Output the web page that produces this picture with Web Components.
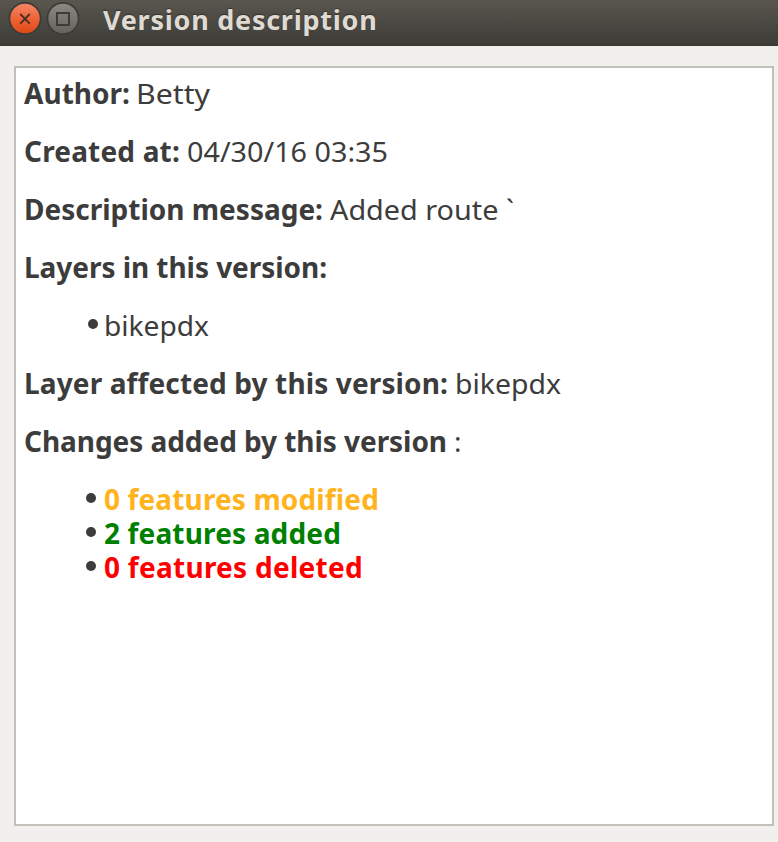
<!DOCTYPE html>
<html lang="en">
<head>
<meta charset="utf-8">
<title>Version description</title>
<style>
html, body { margin: 0; height: 100%; }
body { overflow: hidden; font-family: "Noto Sans", "Open Sans", sans-serif; color: #3c3c3c; background: #f1f0ef; }
</style>
</head>
<body>
<version-window></version-window>
<script>
/* A run of text fitted to an exact width: w = width, gap = space before it.
   Bold runs are fitted by letter spacing, regular ones by stretching. */
class TextRun extends HTMLElement {
  connectedCallback() {
    const root = this.attachShadow({ mode: 'open' });
    root.innerHTML = `<style>
      :host { display: inline-block; white-space: pre; flex: none; }
      :host([bold]) { font-weight: 700; }
      span { display: inline-block; transform-origin: 0 50%; }
    </style><span><slot></slot></span>`;
    const w = +this.getAttribute('w');
    this.style.marginLeft = (this.getAttribute('gap') || 0) + 'px';
    this.style.width = w + 'px';
    const span = root.querySelector('span');
    const natural = span.getBoundingClientRect().width;
    const n = this.textContent.length;
    if (n < 2) return;
    if (this.hasAttribute('bold')) span.style.letterSpacing = ((w - natural) / n).toFixed(3) + 'px';
    else span.style.transform = `scaleX(${(w / natural).toFixed(4)})`;
  }
}

class TitleBar extends HTMLElement {
  connectedCallback() {
    this.attachShadow({ mode: 'open' }).innerHTML = `<style>
      :host { display: flex; box-sizing: border-box; height: 46px; padding: 0 0 0 8px; align-items: flex-start;
        background: linear-gradient(#59564e, #3d3c37 97%, #353430); color: #dfdbd2; }
      svg { display: block; margin-top: 1px; flex: none; }
      .text { font-size: 27px; line-height: 34px; margin-top: 3px; margin-left: 23px; display: flex;
        text-shadow: 0 -1px 1px #33322e; }
    </style>
    <svg width="72" height="36" viewBox="0 0 72 36">
      <defs>
        <linearGradient id="c" x1="0" y1="0" x2="0" y2="1"><stop offset="0" stop-color="#f28868"/><stop offset=".5" stop-color="#ee6436"/><stop offset="1" stop-color="#df4716"/></linearGradient>
        <linearGradient id="m" x1="0" y1="0" x2="0" y2="1"><stop offset="0" stop-color="#8b8982"/><stop offset="1" stop-color="#64625c"/></linearGradient>
      </defs>
      <circle cx="17" cy="17.5" r="15.6" fill="url(#c)" stroke="#3d3b37" stroke-width="1.7"/>
      <path d="M12.2 13l9.6 9.6M21.8 13l-9.6 9.6" stroke="#4c3028" stroke-width="1.9"/>
      <circle cx="55" cy="17.5" r="15.6" fill="url(#m)" stroke="#3d3b37" stroke-width="1.7"/>
      <rect x="49" y="12" width="12" height="12" fill="none" stroke="#3c3b37" stroke-width="2"/>
    </svg>
    <div class="text"><slot></slot></div>`;
  }
}

class InfoRow extends HTMLElement {
  connectedCallback() {
    this.attachShadow({ mode: 'open' }).innerHTML = `<style>
      :host { display: flex; height: 34px; line-height: 34px; font-size: 28px; margin-bottom: 24px; }
    </style><slot></slot>`;
  }
}

class BulletItem extends HTMLElement {
  connectedCallback() {
    const plain = this.hasAttribute('plain');
    this.attachShadow({ mode: 'open' }).innerHTML = `<style>
      :host { display: flex; height: 34px; line-height: 34px; font-size: 28px; padding-left: ${plain ? 63.5 : 61.5}px; }
      i { width: 10.6px; height: 10.6px; border-radius: 50%; background: #3c3c3c; margin: 10.6px ${plain ? 5.9 : 7.9}px 0 0; flex: none; }
    </style><i></i><slot></slot>`;
  }
}

class BulletList extends HTMLElement {
  connectedCallback() {
    this.attachShadow({ mode: 'open' }).innerHTML = `<style>
      :host { display: flex; flex-direction: column; margin-bottom: 24px; }
    </style><slot></slot>`;
  }
}

class VersionWindow extends HTMLElement {
  connectedCallback() {
    this.attachShadow({ mode: 'open' }).innerHTML = `<style>
      :host { display: flex; flex-direction: column; height: 842px; background: #f1f0ef; }
      main { flex: 1; box-sizing: border-box; margin: 20px 4px 16px 14px; border: 2px solid #c1c0b9; background: #fff; padding: 8px 0 0 8px; overflow: hidden; }
    </style>
    <title-bar><text-run bold w="274.5">Version description</text-run></title-bar>
    <main>
      <info-row><text-run bold w="106">Author:</text-run><text-run gap="6" w="74">Betty</text-run></info-row>
      <info-row><text-run bold w="156">Created at:</text-run><text-run gap="7" w="201">04/30/16 03:35</text-run></info-row>
      <info-row><text-run bold w="299">Description message:</text-run><text-run gap="7" w="184">Added route \`</text-run></info-row>
      <info-row><text-run bold w="303">Layers in this version:</text-run></info-row>
      <bullet-list><bullet-item plain><text-run w="105">bikepdx</text-run></bullet-item></bullet-list>
      <info-row><text-run bold w="424">Layer affected by this version:</text-run><text-run gap="7" w="106">bikepdx</text-run></info-row>
      <info-row><text-run bold w="423">Changes added by this version</text-run><text-run gap="7" w="8">:</text-run></info-row>
      <bullet-list>
        <bullet-item><text-run bold w="275" style="color:#ffb31c">0 features modified</text-run></bullet-item>
        <bullet-item><text-run bold w="237" style="color:#008000">2 features added</text-run></bullet-item>
        <bullet-item><text-run bold w="259" style="color:#ff0000">0 features deleted</text-run></bullet-item>
      </bullet-list>
    </main>`;
  }
}
customElements.define('text-run', TextRun);
customElements.define('title-bar', TitleBar);
customElements.define('info-row', InfoRow);
customElements.define('bullet-item', BulletItem);
customElements.define('bullet-list', BulletList);
customElements.define('version-window', VersionWindow);
</script>
</body>
</html>
